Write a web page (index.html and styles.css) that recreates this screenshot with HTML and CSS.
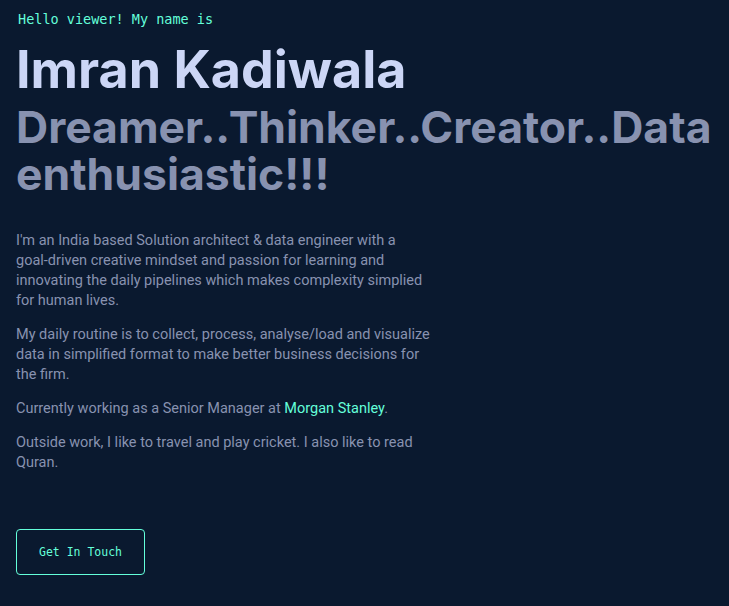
FILE: index.html
```
<!DOCTYPE html>
<html>
<head>
<meta charset="utf-8">
<link rel="stylesheet" href="styles.css">
</head>
<body>
<section class="hero">
  <p class="hello">Hello viewer! My name is</p>
  <h1 class="big name">Imran Kadiwala</h1>
  <h2 class="big sub">Dreamer..Thinker..Creator..Data enthusiastic!!!</h2>
  <div class="about">
    <p>I'm an India based Solution architect &amp; data engineer with a <span class="nowrap">goal-driven</span> creative mindset and passion for learning and innovating the daily pipelines which makes complexity simplied for human lives.</p>
    <p>My daily routine is to collect, process, analyse/load and visualize data in simplified format to make better business decisions for the firm.</p>
    <p>Currently working as a Senior Manager at <a class="link" href="#">Morgan Stanley</a>.</p>
    <p>Outside work, I like to travel and play cricket. I also like to read Quran.</p>
  </div>
  <a class="btn" href="#">Get In Touch</a>
</section>
</body>
</html>
```
FILE: styles.css
```
html, body {
  margin: 0;
  padding: 0;
  background: #0a192f;
  height: 100%;
}
body {
  font-family: Roboto, "Liberation Sans", sans-serif;
  color: #8892b0;
}
.hero {
  padding: 10px 16px 0 16px;
  display: flex;
  flex-direction: column;
  align-items: flex-start;
}
.hello {
  margin: 0 0 0 2px;
  font-family: "DejaVu Sans Mono", monospace;
  font-size: 13.5px;
  line-height: 18px;
  color: #64ffda;
}
.big {
  margin: 0;
  font-family: Inter, "Liberation Sans", sans-serif;
  font-weight: 700;
}
.name {
  margin-top: 14px;
  font-size: 52px;
  line-height: 56px;
  color: #ccd6f6;
}
.sub {
  margin-top: 6px;
  font-size: 44.5px;
  line-height: 47px;
  color: #8892b0;
}
.about {
  margin-top: 33px;
  max-width: 415px;
}
.about p {
  margin: 0 0 14px 0;
  font-size: 14.5px;
  line-height: 20px;
}
.nowrap {
  white-space: nowrap;
}
.link {
  color: #64ffda;
  text-decoration: none;
}
.btn {
  margin-top: 42px;
  display: inline-flex;
  align-items: center;
  justify-content: center;
  width: 127px;
  height: 44px;
  border: 1px solid #64ffda;
  border-radius: 4px;
  color: #64ffda;
  font-family: "DejaVu Sans Mono", monospace;
  font-size: 11.5px;
  text-decoration: none;
}
```
